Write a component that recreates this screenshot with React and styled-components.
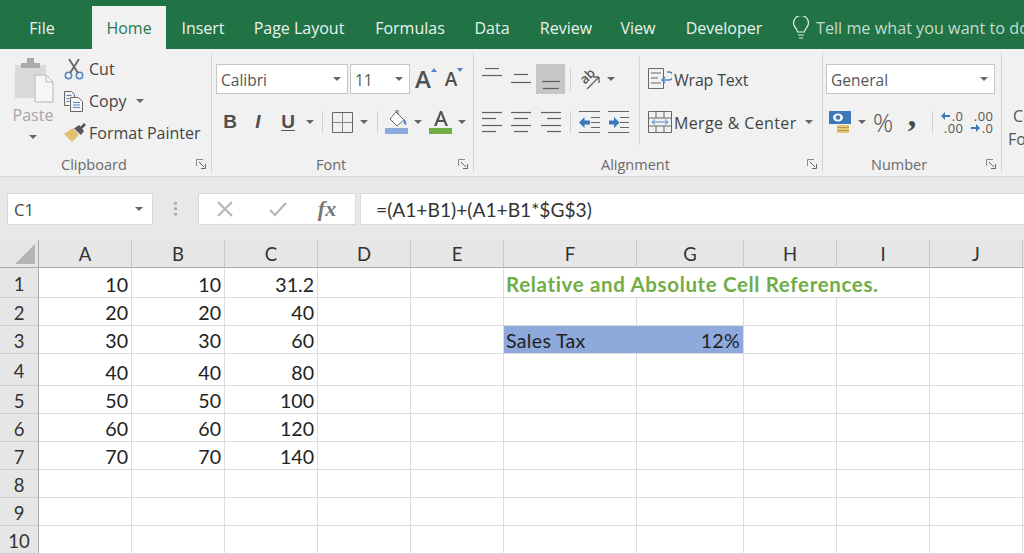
import React from 'react'
import styled, { createGlobalStyle } from 'styled-components'

const GlobalStyle = createGlobalStyle`
  html, body { margin: 0; padding: 0; background: #fff; }
  body { width: 1024px; height: 554px; overflow: hidden; font-family: "Open Sans", "Liberation Sans", sans-serif; }
  * { box-sizing: border-box; }
`

const Page = styled.div`
  width: 1024px;
  height: 554px;
  overflow: hidden;
`

/* tabs */
const TabBar = styled.div`
  display: flex;
  align-items: flex-end;
  height: 49px;
  background: #217346;
  color: #eaf3ee;
  font-size: 16px;
`
const Tab = styled.div`
  width: ${p => p.$w}px;
  height: 43px;
  flex: none;
  display: flex;
  align-items: center;
  justify-content: center;
  background: ${p => (p.$active ? '#f1f1f2' : 'transparent')};
  color: ${p => (p.$active ? '#2a7a50' : '#eaf3ee')};
`
const FileTab = styled(Tab)`
  padding-right: 8px;
`
const TellMe = styled.div`
  display: flex;
  align-items: center;
  gap: 6px;
  height: 43px;
  margin-left: 10px;
  white-space: nowrap;
  font-size: 16.2px;
  color: #c4dccf;
`

/* ribbon */
const Ribbon = styled.div`
  display: flex;
  height: 128px;
  padding-top: 4px;
  padding-bottom: 4px;
  background: #f1f1f2;
  border-bottom: 1px solid #d6d6d6;
  overflow: hidden;
`
const Group = styled.div`
  width: ${p => p.$w}px;
  flex: none;
  display: flex;
  flex-direction: column;
  border-right: ${p => (p.$last ? 'none' : '1px solid #d2d2d2')};
`
const GroupBody = styled.div`
  display: flex;
  flex: 1;
  padding-left: ${p => p.$pad || 0}px;
`
const GroupFoot = styled.div`
  display: flex;
  align-items: center;
  height: 16px;
  padding-left: ${p => p.$left}px;
  padding-right: 5px;
  font-size: 14.5px;
  color: #6a6a6a;
`
const Launcher = styled.svg`
  width: 10px;
  height: 10px;
  margin-left: auto;
`
const PasteCol = styled.div`
  width: 42px;
  flex: none;
  display: flex;
  flex-direction: column;
  align-items: center;
  padding-top: 4px;
  margin-right: 10px;
  color: #a6a6a6;
  font-size: 16px;
`
const PasteText = styled.div`
  line-height: 22px;
  margin-top: 1px;
  margin-bottom: 9px;
`
const SmallCol = styled.div`
  display: flex;
  flex-direction: column;
`
const SmallBtn = styled.div`
  display: flex;
  align-items: center;
  height: 32px;
  font-size: 16px;
  color: #444;
  white-space: nowrap;
`
const SmallIcon = styled.div`
  width: 25px;
  flex: none;
`
const SmallCaret = styled.div`
  margin-left: 9px;
`
const Stack = styled.div`
  display: flex;
  flex-direction: column;
  padding-left: ${p => p.$pad || 0}px;
`
const TallRule = styled.div`
  width: 1px;
  height: 88px;
  flex: none;
  margin: 4px 0 0 6px;
  background: #d6d6d6;
`
const ToolRow = styled.div`
  display: flex;
  align-items: center;
  height: ${p => (p.$lower ? 28 : 30)}px;
  margin-top: ${p => (p.$lower ? 14 : 11)}px;
`
const Slot = styled.div`
  width: ${p => p.$w}px;
  flex: none;
  align-self: stretch;
  display: flex;
  align-items: center;
  justify-content: center;
  background: ${p => (p.$on ? '#c6c6c6' : 'transparent')};
  color: #444;
`
const Combo = styled.div`
  width: ${p => p.$w}px;
  height: 30px;
  flex: none;
  display: flex;
  align-items: center;
  justify-content: space-between;
  margin-right: 2px;
  padding: 0 6px 0 4px;
  background: #fff;
  border: 1px solid #c6c6c6;
  font-size: 15.5px;
  color: #555;
`
const ComboText = styled.span`
  padding-top: 2px;
`
const Divider = styled.div`
  width: 1px;
  height: 22px;
  background: #cfcfcf;
`
const SizeSlot = styled.div`
  width: ${p => p.$w}px;
  flex: none;
  display: flex;
  align-items: flex-start;
  justify-content: center;
`
const SizeA = styled.span`
  font-size: ${p => p.$size}px;
  font-weight: 600;
  line-height: 24px;
  color: #505050;
`
const SizeMark = styled.svg`
  width: 6px;
  height: 4px;
  margin-top: 1px;
`
const Percent = styled.span`
  font-size: 25px;
  font-weight: 300;
  line-height: 1;
  color: #505050;
`
const Comma = styled.span`
  font-family: "Liberation Serif", serif;
  font-size: 34px;
  font-weight: 700;
  line-height: 28px;
  margin-top: -14px;
  color: #4a4a4a;
`
const ToolLetter = styled.span`
  font-family: "Liberation Sans", sans-serif;
  font-size: 19px;
  font-weight: 700;
  font-style: ${p => (p.$italic ? 'italic' : 'normal')};
  text-decoration: ${p => (p.$under ? 'underline' : 'none')};
  text-underline-offset: 2px;
  color: #505050;
`
const TextBtn = styled.div`
  display: flex;
  align-items: center;
  gap: 2px;
  font-size: 16px;
  letter-spacing: ${p => p.$track || 0}px;
  color: #444;
  white-space: nowrap;
`
const TextBtnLabel = styled.span`
  padding-top: 2px;
`
const CutOff = styled.div`
  padding-top: ${p => p.$top}px;
  font-size: 16px;
  line-height: 23px;
  color: #555;
  white-space: nowrap;
`
const CutLine = styled.div`
  padding-left: ${p => p.$left}px;
`

/* formula bar */
const FormulaBar = styled.div`
  display: flex;
  align-items: flex-start;
  height: 63px;
  padding: 16px 0 0 7px;
  background: #e8e8e8;
`
const NameBox = styled.div`
  width: 146px;
  height: 32px;
  flex: none;
  display: flex;
  align-items: center;
  justify-content: space-between;
  padding: 0 9px 0 6px;
  background: #fff;
  border: 1px solid #d9d9d9;
  font-size: 16.5px;
  color: #444;
`
const Dots = styled.div`
  width: 45px;
  height: 32px;
  flex: none;
  display: flex;
  align-items: center;
  justify-content: center;
`
const FxBox = styled.div`
  width: 158px;
  height: 32px;
  flex: none;
  display: flex;
  align-items: center;
  background: #fff;
  border: 1px solid #d9d9d9;
`
const FxSlot = styled.div`
  width: ${p => p.$w}px;
  flex: none;
  display: flex;
  justify-content: center;
  align-items: center;
`
const FxLabel = styled.span`
  font-family: "Liberation Serif", serif;
  font-style: italic;
  font-weight: 700;
  font-size: 22px;
  color: #777;
`
const FormulaInput = styled.div`
  flex: 1;
  height: 32px;
  margin-left: 4px;
  display: flex;
  align-items: center;
  padding-left: 15px;
  background: #fff;
  border: 1px solid #d9d9d9;
  border-right: none;
  font-family: Lato, sans-serif;
  font-size: 19.2px;
  color: #333;
`

/* sheet */
const Sheet = styled.div`
  display: grid;
  grid-template-columns: 39px repeat(5, 93px) 133px 107px 93px 93px 93px 1fr;
  grid-template-rows: 28px 30px 28px 28px 32px 28px 28px 28px 28px 28px 28px;
  font-family: Lato, sans-serif;
  font-size: 19.6px;
  color: #222;
`
const Corner = styled.div`
  display: flex;
  align-items: flex-end;
  justify-content: flex-end;
  padding: 0 3px 3px 0;
  background: #e6e6e6;
  border-right: 1px solid #a9a9a9;
  border-bottom: 1px solid #a9a9a9;
`
const ColHead = styled.div`
  display: flex;
  align-items: center;
  justify-content: center;
  background: #e6e6e6;
  border-right: 1px solid #c8c8c8;
  border-bottom: 1px solid #a9a9a9;
  font-size: 18.5px;
  color: #333;
`
const RowHead = styled.div`
  display: flex;
  align-items: center;
  justify-content: center;
  padding-top: 2px;
  background: #e6e6e6;
  border-right: 1px solid #a9a9a9;
  border-bottom: 1px solid #cfcfcf;
  font-size: 18.5px;
  color: #333;
`
const Cell = styled.div`
  display: flex;
  align-items: flex-end;
  justify-content: ${p => (p.$num ? 'flex-end' : 'flex-start')};
  grid-column: ${p => (p.$span ? `span ${p.$span}` : 'auto')};
  line-height: 24px;
  padding: 0 3px 0 2px;
  white-space: nowrap;
  letter-spacing: ${p => (p.$fill ? 0.3 : 0)}px;
  background: ${p => (p.$fill ? '#8ea9db' : '#fff')};
  border-right: 1px solid ${p => (p.$fill && !p.$end ? '#8ea9db' : '#dcdcdc')};
  border-bottom: 1px solid #dcdcdc;
`
const TitleCell = styled(Cell)`
  font-size: 20.5px;
  font-weight: 700;
  line-height: 26px;
  letter-spacing: 0.65px;
  color: #70ad47;
`

const Ic = styled.svg`
  display: block;
  flex: none;
`

const Caret = () => (
  <Ic width="8" height="4" viewBox="0 0 8 4"><path d="M0 0h8L4 4z" fill="#666" /></Ic>
)

const PasteIcon = () => (
  <Ic width="42" height="46" viewBox="0 0 42 46">
    <path d="M3 8h31v33H3z" fill="#d9d9d9" />
    <path d="M9 6h6V1h7v5h6v5H9z" fill="#aaa" />
    <path d="M23 18h11l7 7v20H23z" fill="#f6f6f6" stroke="#b8b8b8" />
    <path d="M34 18v7h7" fill="none" stroke="#b8b8b8" />
  </Ic>
)
const CutIcon = () => (
  <Ic width="20" height="22" viewBox="0 0 20 22">
    <circle cx="4.500" cy="17.500" r="3.200" fill="none" stroke="#4f86c6" strokeWidth="1.500" />
    <circle cx="15.500" cy="17.500" r="3.200" fill="none" stroke="#4f86c6" strokeWidth="1.500" />
    <path d="M6 15 15 1M14 15 5 1" stroke="#666" strokeWidth="1.800" fill="none" />
  </Ic>
)
const CopyIcon = () => (
  <Ic width="20" height="21" viewBox="0 0 20 21" fill="none" stroke="#666">
    <path d="M.5.5h7l3 3v3M.5.5v14h5" />
    <path d="M6.500 6.500h8l4 4v10h-12z" fill="#f6f6f6" />
    <path d="M2.500 4.500h5M2.500 7.500h3M2.500 10.500h3M9 11.500h7M9 14h7M9 16.500h7" stroke="#4f86c6" />
  </Ic>
)
const PainterIcon = () => (
  <Ic width="22" height="20" viewBox="0 0 22 20">
    <path d="M0 11 9 5l6 7-7 7z" fill="#e0bf6f" />
    <path d="M10 5.500 15 2l5 6-3 4z" fill="#555" />
    <path d="M17 5l4-4" stroke="#555" strokeWidth="2.500" />
  </Ic>
)
const LauncherIcon = () => (
  <Launcher viewBox="0 0 10 10" fill="none" stroke="#8a8a8a">
    <path d="M.5 7V.5H7" />
    <path d="M3 3l5 5M9.500 5v4.500H5" stroke="#666" />
  </Launcher>
)
const BordersIcon = () => (
  <Ic width="21" height="21" viewBox="0 0 21 21" fill="none" stroke="#666">
    <path d="M.5.5h20v20H.5z" />
    <path d="M10.500 1v19M1 10.500h19" stroke="#888" />
  </Ic>
)
const FillIcon = () => (
  <Ic width="24" height="24" viewBox="0 0 24 24">
    <path d="M11 2 19 10l-7 6-7-7z" fill="#fff" stroke="#666" />
    <path d="M11 2V0h2v5" stroke="#666" fill="none" />
    <path d="M19 9c2 2 3 4 2 6-2 0-3-3-2-6z" fill="#4f86c6" />
    <path d="M0 18h23v6H0z" fill="#8ea9db" />
  </Ic>
)
const FontColorIcon = () => (
  <Ic width="24" height="24" viewBox="0 0 24 24">
    <path d="M5 16 11 1h2l6 15h-2.500l-1.500-4H9l-1.500 4zM10 10h4l-2-6z" fill="#555" fillRule="evenodd" />
    <path d="M0 18h23v6H0z" fill="#70ad47" />
  </Ic>
)
const LinesIcon = ({ rows }) => (
  <Ic width="20" height="22" viewBox="0 0 20 22" fill="none" stroke="#5f5f5f" strokeWidth="1.200">
    {rows.map(([y, x1, x2]) => <path key={y} d={`M${x1} ${y}.5H${x2}`} />)}
  </Ic>
)
const OrientIcon = () => (
  <Ic width="22" height="22" viewBox="0 0 22 22">
    <text x="1" y="13" fontFamily="Open Sans, sans-serif" fontSize="13" fontWeight="600" fill="#555" transform="rotate(-45 8 9)">ab</text>
    <path d="M8 21 20 9M20 9h-6M20 9v6" stroke="#666" strokeWidth="1.400" fill="none" />
  </Ic>
)
const IndentIcon = ({ flip }) => (
  <Ic width="22" height="22" viewBox="0 0 22 22">
    <path d="M0 .5h21M12 6.500h9M12 11.500h9M12 16.500h9M0 21.500h21" stroke="#666" fill="none" />
    <path d={flip ? 'M1 9.500h5V6l5.500 5.500L6 17v-3.500H1z' : 'M0 11.500 5.500 6v3.500H11v4H5.500V17z'} fill="#3d78b8" />
  </Ic>
)
const WrapIcon = () => (
  <Ic width="24" height="22" viewBox="0 0 24 22" fill="none" stroke="#666">
    <path d="M.5.5h15v20H.5zM3 5h10M3 10h7M3 15h10" />
    <path d="M19 4h2a2.500 2.500 0 0 1 0 8h-6M17 9l-3 3 3 3" stroke="#4f86c6" strokeWidth="1.500" />
  </Ic>
)
const MergeIcon = () => (
  <Ic width="24" height="22" viewBox="0 0 24 22" fill="none" stroke="#666">
    <path d="M.5.5h23v21H.5zM1 7h22M1 15h22M8 1v6M16 1v6M8 15v6M16 15v6" />
    <path d="M4 11h16M7 8.500 4 11l3 2.500M17 8.500l3 2.500-3 2.500" stroke="#4f86c6" />
  </Ic>
)
const CurrencyIcon = () => (
  <Ic width="24" height="24" viewBox="0 0 24 24">
    <path d="M1 1h22v13H1z" fill="#3d78b8" />
    <ellipse cx="10" cy="7.500" rx="5" ry="4" fill="#fff" />
    <circle cx="10" cy="7.500" r="2.300" fill="#3d78b8" />
    <path d="M9 15h12v8H9z" fill="#e8c878" />
    <path d="M9 17.500h12M9 20.500h12" stroke="#b99b50" />
  </Ic>
)
const DecimalText = styled.span`
  display: block;
  font-size: 13px;
  line-height: 12px;
  letter-spacing: 0.4px;
  color: #555;
  white-space: pre;
`
const DecRow = styled.div`
  display: flex;
  align-items: center;
  justify-content: flex-end;
  gap: 2px;
`
const DecStack = styled.div`
  display: flex;
  flex-direction: column;
  align-items: flex-end;
`
const BlueArrow = ({ flip }) => (
  <Ic width="9" height="8" viewBox="0 0 9 8">
    <path d={flip ? 'M0 3h5V0l4 4-4 4V5H0z' : 'M9 3H4V0L0 4l4 4V5h5z'} fill="#3d78b8" />
  </Ic>
)

const tabs = [
  ['Insert', 74], ['Page Layout', 118], ['Formulas', 104], ['Data', 60],
  ['Review', 88], ['View', 56], ['Developer', 116],
]
const colNames = ['A', 'B', 'C', 'D', 'E', 'F', 'G', 'H', 'I', 'J', '']
const values = [
  [10, 10, 31.2], [20, 20, 40], [30, 30, 60], [40, 40, 80],
  [50, 50, 100], [60, 60, 120], [70, 70, 140], [], [], [],
]

const renderCells = (row, i) => {
  const cells = []
  for (let c = 0; c < 11; c++) {
    if (c < 3) {
      cells.push(<Cell key={c} $num>{row[c]}</Cell>)
    } else if (i === 0 && c === 5) {
      cells.push(<TitleCell key={c} $span={4}>Relative and Absolute Cell References.</TitleCell>)
      c += 3
    } else if (i === 2 && c === 5) {
      cells.push(<Cell key={c} $fill>Sales Tax</Cell>)
    } else if (i === 2 && c === 6) {
      cells.push(<Cell key={c} $fill $end $num>12%</Cell>)
    } else {
      cells.push(<Cell key={c} />)
    }
  }
  return cells
}

const App = () => {
  return (
    <Page>
      <GlobalStyle />
      <TabBar>
        <FileTab $w={92}>File</FileTab>
        <Tab $w={74} $active>Home</Tab>
        {tabs.map(([name, w]) => <Tab key={name} $w={w}>{name}</Tab>)}
        <TellMe>
          <Ic width="18" height="24" viewBox="0 0 18 24" fill="none" stroke="#e6f0ea" strokeWidth="1.200">
            <path d="M5.500 16c0-3-4-5-4-9a7.500 7.500 0 0 1 15 0c0 4-4 6-4 9z" />
            <path d="M6 19h6M7 22h4" />
          </Ic>
          Tell me what you want to do
        </TellMe>
      </TabBar>

      <Ribbon>
        <Group $w={212}>
          <GroupBody $pad={12}>
            <PasteCol>
              <PasteIcon />
              <PasteText>Paste</PasteText>
              <Caret />
            </PasteCol>
            <SmallCol>
              <SmallBtn><SmallIcon><CutIcon /></SmallIcon>Cut</SmallBtn>
              <SmallBtn><SmallIcon><CopyIcon /></SmallIcon>Copy<SmallCaret><Caret /></SmallCaret></SmallBtn>
              <SmallBtn><SmallIcon><PainterIcon /></SmallIcon>Format Painter</SmallBtn>
            </SmallCol>
          </GroupBody>
          <GroupFoot $left={61}>Clipboard<LauncherIcon /></GroupFoot>
        </Group>

        <Group $w={262}>
          <GroupBody $pad={4}>
            <Stack>
              <ToolRow>
                <Combo $w={132}><ComboText>Calibri</ComboText><Caret /></Combo>
                <Combo $w={60}><ComboText>11</ComboText><Caret /></Combo>
                <SizeSlot $w={28}>
                  <SizeA $size={24}>A</SizeA>
                  <SizeMark viewBox="0 0 6 4"><path d="M0 4h6L3 0z" fill="#4f86c6" /></SizeMark>
                </SizeSlot>
                <SizeSlot $w={28}>
                  <SizeA $size={19}>A</SizeA>
                  <SizeMark viewBox="0 0 6 4"><path d="M0 0h6L3 4z" fill="#4f86c6" /></SizeMark>
                </SizeSlot>
              </ToolRow>
              <ToolRow $lower>
                <Slot $w={28}><ToolLetter>B</ToolLetter></Slot>
                <Slot $w={28}><ToolLetter $italic>I</ToolLetter></Slot>
                <Slot $w={32}><ToolLetter $under>U</ToolLetter></Slot>
                <Slot $w={12}><Caret /></Slot>
                <Slot $w={12}><Divider /></Slot>
                <Slot $w={28}><BordersIcon /></Slot>
                <Slot $w={16}><Caret /></Slot>
                <Slot $w={10}><Divider /></Slot>
                <Slot $w={29}><FillIcon /></Slot>
                <Slot $w={14}><Caret /></Slot>
                <Slot $w={31}><FontColorIcon /></Slot>
                <Slot $w={12}><Caret /></Slot>
              </ToolRow>
            </Stack>
          </GroupBody>
          <GroupFoot $left={104}>Font<LauncherIcon /></GroupFoot>
        </Group>

        <Group $w={349}>
          <GroupBody $pad={4}>
            <Stack>
              <ToolRow>
                <Slot $w={28}><LinesIcon rows={[[0, 3, 17], [7, 0, 20]]} /></Slot>
                <Slot $w={30}><LinesIcon rows={[[6, 3, 17], [14, 0, 20]]} /></Slot>
                <Slot $w={29} $on><LinesIcon rows={[[13, 1, 19], [20, 2, 18]]} /></Slot>
                <Slot $w={10}><Divider /></Slot>
                <Slot $w={30}><OrientIcon /></Slot>
                <Slot $w={12}><Caret /></Slot>
              </ToolRow>
              <ToolRow $lower>
                <Slot $w={28}><LinesIcon rows={[[1, 0, 20], [7, 0, 14], [14, 0, 20], [20, 0, 14]]} /></Slot>
                <Slot $w={30}><LinesIcon rows={[[1, 0, 20], [7, 3, 17], [14, 0, 20], [20, 3, 17]]} /></Slot>
                <Slot $w={29}><LinesIcon rows={[[1, 0, 20], [7, 6, 20], [14, 0, 20], [20, 6, 20]]} /></Slot>
                <Slot $w={10}><Divider /></Slot>
                <Slot $w={30}><IndentIcon /></Slot>
                <Slot $w={28}><IndentIcon flip /></Slot>
              </ToolRow>
            </Stack>
            <TallRule />
            <Stack $pad={8}>
              <ToolRow>
                <TextBtn $track={-0.2}><WrapIcon /><TextBtnLabel>Wrap Text</TextBtnLabel></TextBtn>
              </ToolRow>
              <ToolRow $lower>
                <TextBtn $track={0.35}><MergeIcon /><TextBtnLabel>Merge &amp; Center</TextBtnLabel></TextBtn>
                <Slot $w={24}><Caret /></Slot>
              </ToolRow>
            </Stack>
          </GroupBody>
          <GroupFoot $left={127}>Alignment<LauncherIcon /></GroupFoot>
        </Group>

        <Group $w={179}>
          <GroupBody $pad={3}>
            <Stack>
              <ToolRow><Combo $w={169}><ComboText>General</ComboText><Caret /></Combo></ToolRow>
              <ToolRow $lower>
                <Slot $w={28}><CurrencyIcon /></Slot>
                <Slot $w={16}><Caret /></Slot>
                <Slot $w={26}><Percent>%</Percent></Slot>
                <Slot $w={32}><Comma>,</Comma></Slot>
                <Slot $w={8}><Divider /></Slot>
                <Slot $w={32}>
                  <DecStack>
                    <DecRow><BlueArrow /><DecimalText>.0</DecimalText></DecRow>
                    <DecimalText>.00</DecimalText>
                  </DecStack>
                </Slot>
                <Slot $w={28}>
                  <DecStack>
                    <DecimalText>.00</DecimalText>
                    <DecRow><BlueArrow flip /><DecimalText>.0</DecimalText></DecRow>
                  </DecStack>
                </Slot>
              </ToolRow>
            </Stack>
          </GroupBody>
          <GroupFoot $left={48}>Number<LauncherIcon /></GroupFoot>
        </Group>

        <Group $w={22} $last>
          <CutOff $top={52}>
            <CutLine $left={11}>Conditional</CutLine>
            <CutLine $left={6}>Formatting</CutLine>
          </CutOff>
        </Group>
      </Ribbon>

      <FormulaBar>
        <NameBox>C1<Caret /></NameBox>
        <Dots>
          <Ic width="3" height="16" viewBox="0 0 3 16">
            <path d="M0 1h3v2.500H0zM0 6.500h3V9H0zM0 12h3v2.500H0z" fill="#aaa" />
          </Ic>
        </Dots>
        <FxBox>
          <FxSlot $w={52}>
            <Ic width="18" height="16" viewBox="0 0 18 16"><path d="M2 1l14 14M16 1 2 15" stroke="#b5b5b5" strokeWidth="2" /></Ic>
          </FxSlot>
          <FxSlot $w={54}>
            <Ic width="18" height="16" viewBox="0 0 18 16"><path d="M1 9l5 5L17 2" stroke="#b5b5b5" strokeWidth="2.200" fill="none" /></Ic>
          </FxSlot>
          <FxSlot $w={44}><FxLabel>fx</FxLabel></FxSlot>
        </FxBox>
        <FormulaInput>=(A1+B1)+(A1+B1*$G$3)</FormulaInput>
      </FormulaBar>

      <Sheet>
        <Corner>
          <Ic width="20" height="20" viewBox="0 0 20 20"><path d="M20 0v20H0z" fill="#b4b4b4" /></Ic>
        </Corner>
        {colNames.map((name, i) => <ColHead key={i}>{name}</ColHead>)}
        {values.map((row, i) => (
          <React.Fragment key={i}>
            <RowHead>{i + 1}</RowHead>
            {renderCells(row, i)}
          </React.Fragment>
        ))}
      </Sheet>
    </Page>
  )
}

export default App
